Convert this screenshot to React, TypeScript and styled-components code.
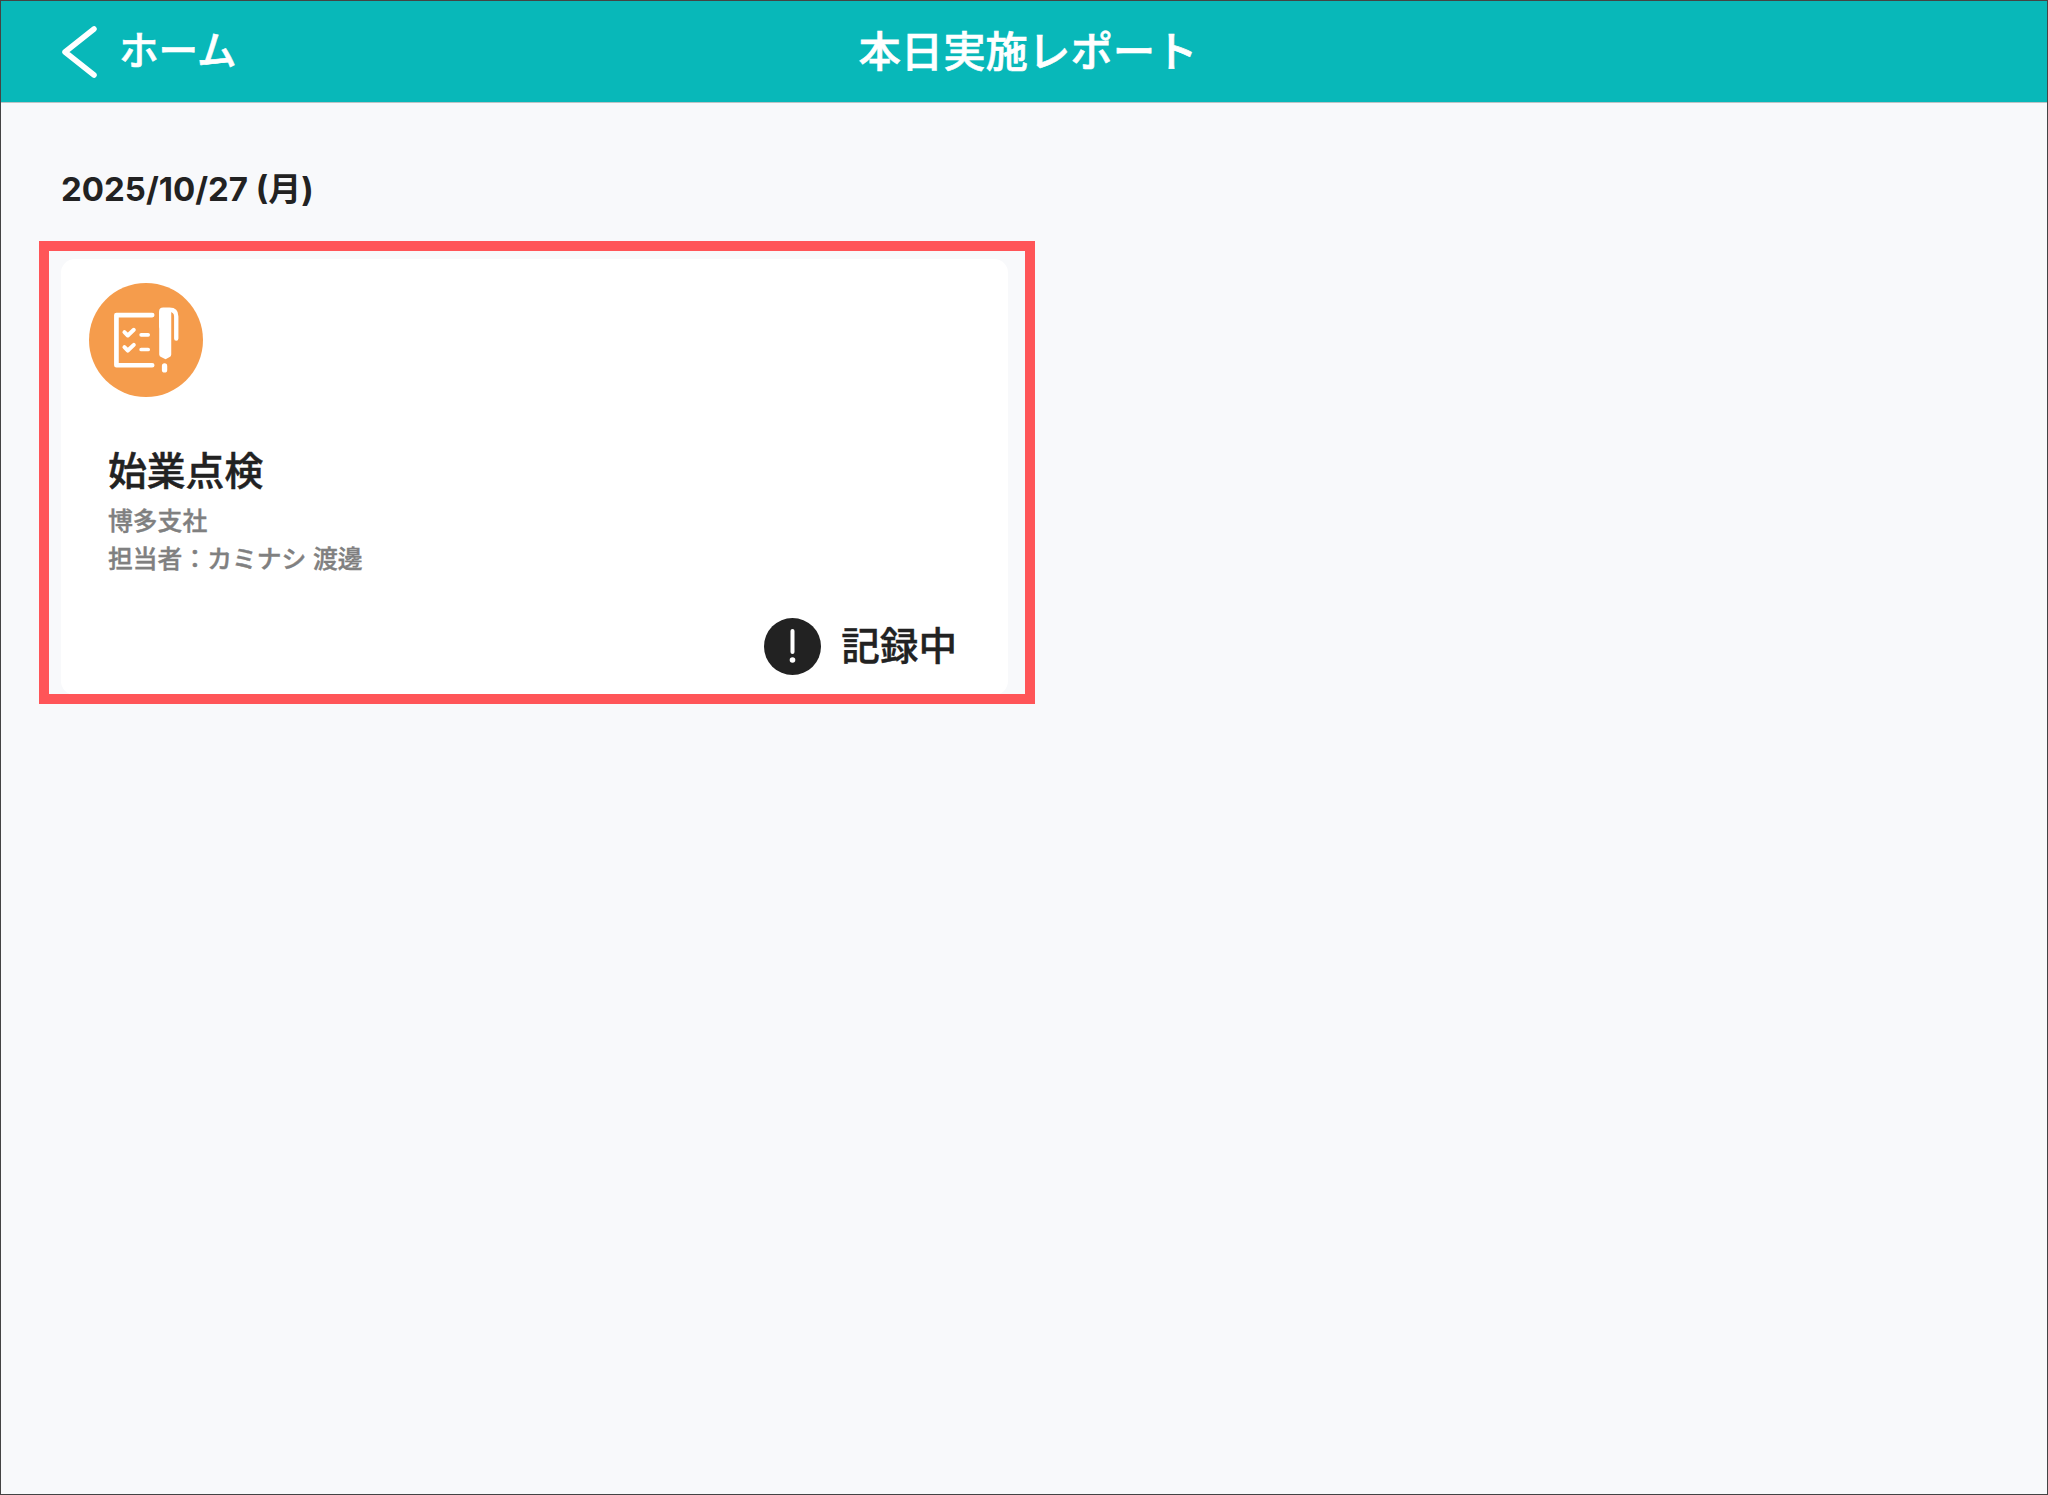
import React from 'react';
import styled, {createGlobalStyle} from 'styled-components';

const GlobalStyle = createGlobalStyle`
    html, body {
        margin: 0;
        padding: 0;
        background-color: #f8f9fb;
    }

    * {
        box-sizing: border-box;
    }
`;

const App = () => {
    return (
        <Page>
            <GlobalStyle />
            <Header>
                <BackButton>
                    <BackIcon viewBox="0 0 36 52">
                        <path d="M33 3L4 26L33 49"></path>
                    </BackIcon>
                    <BackLabel>ホーム</BackLabel>
                </BackButton>
                <Title>本日実施レポート</Title>
            </Header>

            <Content>
                <DateLabel>2025/10/27 (月)</DateLabel>
                <CardColumn>
                    <Card>
                        <CardIcon viewBox="57 40 341 341">
                            <circle cx="227.5" cy="210.5" r="170.5" fill="#f59c4c"></circle>
                            <g fill="none" stroke="#fff" strokeLinecap="round" strokeLinejoin="round">
                                <path strokeWidth="14" d="M246 136H139V286H246"></path>
                                <path strokeWidth="12" d="M163 187l10 10l18-17M163 232l10 10l18-17"></path>
                                <path strokeWidth="11" d="M213 195H234M213 239H234"></path>
                                <path strokeWidth="13" d="M273 170V126q0-6 6-6H298q20 0 20 20V206"></path>
                            </g>
                            <path fill="#fff" d="M267 126H303V254q0 6-6 8L286 268L274 262q-7-2-7-8Z"></path>
                            <rect fill="#fff" x="275" y="280" width="16" height="28" rx="8"></rect>
                        </CardIcon>
                        <CardBody>
                            <CardTitle>始業点検</CardTitle>
                            <CardMeta>博多支社</CardMeta>
                            <CardMeta>担当者：カミナシ 渡邊</CardMeta>
                        </CardBody>
                        <StatusRow>
                            <StatusIcon viewBox="0 0 57 57">
                                <circle cx="28.5" cy="28.5" r="28.5" fill="#222"></circle>
                                <rect x="26.5" y="11" width="4" height="25" rx="2" fill="#fff"></rect>
                                <circle cx="28.5" cy="42" r="2.8" fill="#fff"></circle>
                            </StatusIcon>
                            <StatusLabel>記録中</StatusLabel>
                        </StatusRow>
                        <Highlight />
                    </Card>
                </CardColumn>
            </Content>
        </Page>
    )
}

export default App;

const Page = styled.div`
    display: flex;
    flex-direction: column;
    height: 1495px;
    border: 1px solid #444;
    background-color: #f8f9fb;
    font-family: Inter, "Noto Sans CJK JP", sans-serif;
    color: #222;
    overflow: hidden;
`;

const Header = styled.header`
    position: relative;
    display: flex;
    flex-shrink: 0;
    align-items: center;
    justify-content: center;
    height: 102px;
    padding: 2px 0 0 8px;
    background-color: #08b8b9;
    border-bottom: 1px solid #bcc4c6;
`;

const BackButton = styled.div`
    position: absolute;
    left: 60px;
    top: 0;
    bottom: 0;
    display: flex;
    align-items: center;
    gap: 22px;
`;

const BackIcon = styled.svg`
    width: 36px;
    height: 52px;

    path {
        fill: none;
        stroke: #fff;
        stroke-width: 5.5;
        stroke-linecap: round;
        stroke-linejoin: round;
    }
`;

const BackLabel = styled.span`
    color: #fff;
    font-size: 39.6px;
    font-weight: 500;
    line-height: 1;
    -webkit-text-stroke: 0.6px #fff;
`;

const Title = styled.h1`
    margin: 0;
    color: #fff;
    font-size: 42.4px;
    font-weight: 500;
    line-height: 1;
    -webkit-text-stroke: 0.6px #fff;
`;

const Content = styled.main`
    display: flex;
    flex-direction: column;
    padding: 66px 0 0 60px;
`;

const DateLabel = styled.div`
    height: 40px;
    font-size: 33px;
    font-weight: 700;
    line-height: 40px;
`;

const CardColumn = styled.div`
    width: 947px;
    margin-top: 50px;
`;

const Card = styled.section`
    position: relative;
    display: flex;
    flex-direction: column;
    height: 436px;
    padding: 24px 51px 20px 28px;
    background-color: #fff;
    border-radius: 14px;
`;

const Highlight = styled.div`
    position: absolute;
    left: -22px;
    top: -18px;
    right: -27px;
    bottom: -9px;
    border: 10px solid #ff5558;
    pointer-events: none;
`;

const CardIcon = styled.svg`
    flex-shrink: 0;
    width: 114px;
    height: 114px;
`;

const CardBody = styled.div`
    display: flex;
    flex-direction: column;
    margin: 51px 0 0 19px;
`;

const CardTitle = styled.h2`
    margin: 0 0 8px 0;
    font-size: 38.8px;
    font-weight: 500;
    line-height: 46px;
    color: #222;
    -webkit-text-stroke: 0.5px #222;
`;

const CardMeta = styled.div`
    font-size: 24.8px;
    font-weight: 500;
    line-height: 38px;
    color: #808080;
    -webkit-text-stroke: 0.4px #808080;
`;

const StatusRow = styled.div`
    display: flex;
    align-items: center;
    justify-content: flex-end;
    gap: 20px;
    margin-top: auto;
`;

const StatusIcon = styled.svg`
    width: 57px;
    height: 57px;
`;

const StatusLabel = styled.span`
    font-size: 38.6px;
    font-weight: 500;
    line-height: 57px;
    color: #222;
    -webkit-text-stroke: 0.4px #222;
`;
